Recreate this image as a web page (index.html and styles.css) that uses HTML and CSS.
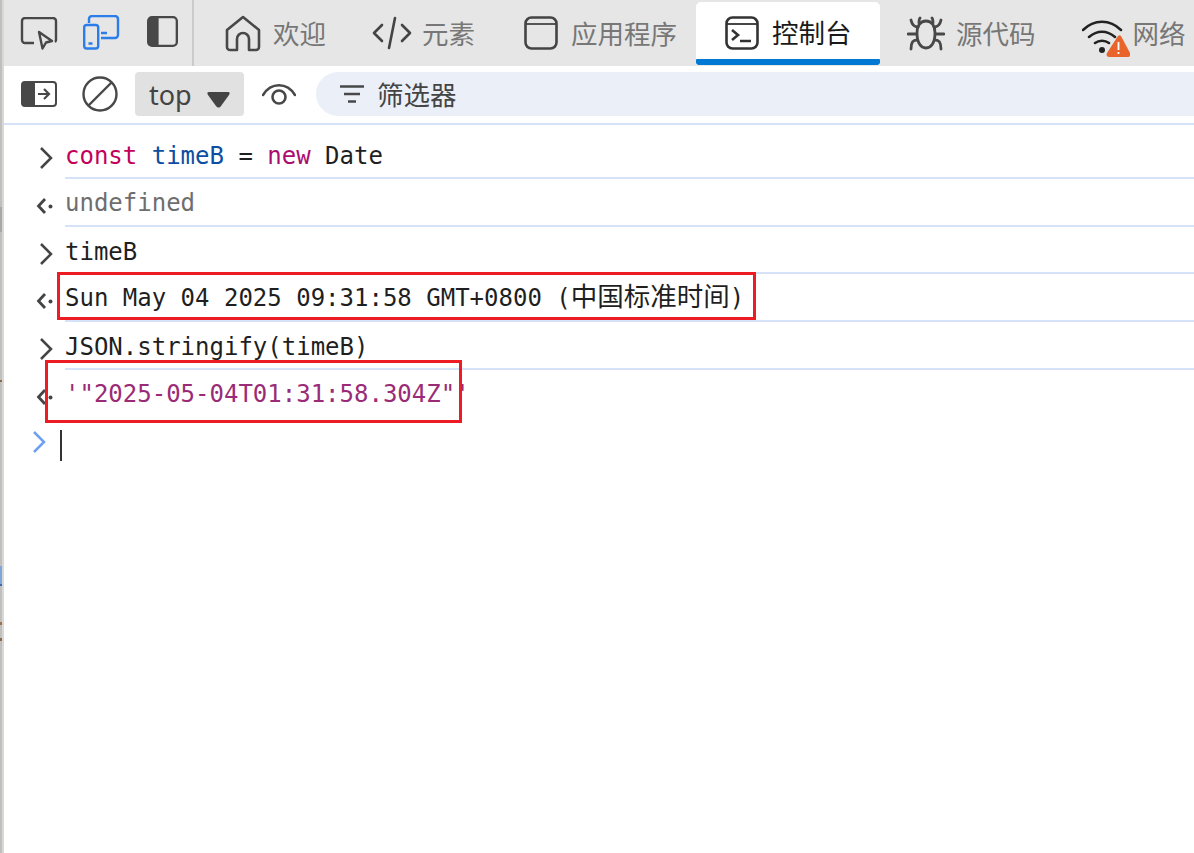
FILE: index.html
```html
<!DOCTYPE html>
<html lang="zh">
<head>
<meta charset="utf-8">
<title>控制台</title>
<link rel="stylesheet" href="styles.css">
</head>
<body>
<div class="edge"></div>
<div class="main">
  <header class="tabbar">
    <div class="tools">
      <svg class="tool t-inspect" width="38" height="34" viewBox="0 0 38 34" fill="none" stroke="#484848" stroke-width="2.400"><path d="M14 26H5a3 3 0 0 1-3-3V4a3 3 0 0 1 3-3h28a3 3 0 0 1 3 3v19a3 3 0 0 1-1 2"/><path d="M19 15l13 9-6 1.500-3.500 6z" stroke-linejoin="round"/></svg>
      <svg class="tool t-device" width="37" height="35" viewBox="0 0 37 35" fill="none" stroke="#2b7de9" stroke-width="2.400"><path d="M6 8V4a3 3 0 0 1 3-3h23a3 3 0 0 1 3 3v16a3 3 0 0 1-3 3H18"/><rect x="1.200" y="10" width="14" height="23.500" rx="2.500"/><path d="M5.500 28.500h4M18 18h6"/></svg>
      <svg class="tool t-dock" width="31" height="31" viewBox="0 0 32 32"><path d="M5 1h7v30H5a4 4 0 0 1-4-4V5a4 4 0 0 1 4-4z" fill="#484848"/><rect x="1.200" y="1.200" width="29.600" height="29.600" rx="4" fill="none" stroke="#484848" stroke-width="2.400"/></svg>
    </div>
    <div class="sep"></div>
    <nav class="tabs">
      <div class="tab">
        <span class="ti"><svg width="36" height="37" viewBox="0 0 36 37" fill="none" stroke="#484848" stroke-width="2.600" stroke-linejoin="round"><path d="M2 15L18 2l16 13v17a3 3 0 0 1-3 3h-7V24a6 6 0 0 0-12 0v11H5a3 3 0 0 1-3-3z"/></svg></span>
        <span class="tl">欢迎</span>
      </div>
      <div class="tab">
        <span class="ti"><svg width="40" height="36" viewBox="0 0 40 36" fill="none" stroke="#444" stroke-width="2.600" stroke-linecap="round" stroke-linejoin="round"><path d="M10 10l-8 8 8 8M30 10l8 8-8 8M23 3l-6 30"/></svg></span>
        <span class="tl">元素</span>
      </div>
      <div class="tab">
        <span class="ti"><svg width="34" height="34" viewBox="0 0 34 34" fill="none" stroke="#444" stroke-width="2.600"><rect x="1.500" y="1.500" width="31" height="31" rx="6"/><path d="M2 8h30" stroke-width="1.800"/></svg></span>
        <span class="tl">应用程序</span>
      </div>
      <div class="tab tab-active">
        <span class="ti"><svg width="34" height="34" viewBox="0 0 34 34" fill="none" stroke="#333" stroke-width="2.600"><rect x="1.500" y="1.500" width="31" height="31" rx="6"/><path d="M2 8h30" stroke-width="1.800"/><path d="M7 14l6 5-6 5M15 25h11"/></svg></span>
        <span class="tl">控制台</span>
      </div>
      <div class="tab tab-src">
        <span class="ti"><svg width="38" height="36" viewBox="0 0 38 36" fill="none" stroke="#484848" stroke-width="2.800" stroke-linecap="round"><path d="M19 6c6 0 9 5 9 12 0 10-4 15-9 15s-9-5-9-15c0-7 3-12 9-12z"/><path d="M12 8c0-2 0-4 1-5M26 8c0-2 0-4-1-5M11 12C7 12 5 10 4 5M27 12c4 0 6-2 7-7M9 19H1M29 19h8M10 25c-4 0-6 2-6 9M28 25c4 0 6 2 6 9"/></svg></span>
        <span class="tl">源代码</span>
      </div>
      <div class="tab tab-net">
        <span class="ti ti-net"><svg width="48" height="44" viewBox="0 0 48 44"><g fill="none" stroke="#222" stroke-width="2.500" stroke-linecap="round"><path d="M1 13C12 2 28 2 39 13M7 20c8-7 18-7 26 0M13 26c4-3 10-3 14 0"/></g><circle cx="20" cy="33" r="3" fill="#222"/><path d="M36 19c1-1 2-1 3 0l9 17c1 2 0 4-2 4H27c-2 0-3-2-2-4z" fill="#e9642a"/><path d="M36.500 25v8M36.500 35v2" stroke="#fff" stroke-width="1.800"/></svg></span>
        <span class="tl">网络</span>
      </div>
    </nav>
  </header>

  <div class="filterbar">
    <svg class="fb-side" width="36" height="26" viewBox="0 0 36 26"><path d="M4 1h10v24H4a3 3 0 0 1-3-3V4a3 3 0 0 1 3-3z" fill="#484848"/><rect x="1" y="1" width="34" height="24" rx="3" fill="none" stroke="#484848" stroke-width="2"/><path d="M17 13h11M23 8l5 5-5 5" fill="none" stroke="#484848" stroke-width="2.200"/></svg>
    <svg class="fb-block" width="36" height="36" viewBox="0 0 36 36" fill="none" stroke="#484848" stroke-width="2.400"><circle cx="18" cy="18" r="16.500"/><path d="M6.500 29.500l23-23"/></svg>
    <div class="context">
      <span class="ctx-label">top</span>
      <svg width="23" height="16" viewBox="0 0 23 16"><path d="M2 0h19c2 0 2 1 1 3l-8 11c-1.500 2-3.500 2-5 0L1 3C0 1 0 0 2 0z" fill="#444"/></svg>
    </div>
    <svg class="fb-eye" width="34" height="22" viewBox="0 0 34 22" fill="none" stroke="#484848" stroke-width="2.600"><path d="M1 12C9 -1 25 -1 33 12" stroke-linecap="round"/><circle cx="17" cy="14" r="6.500"/></svg>
    <div class="filter">
      <svg width="24" height="18" viewBox="0 0 24 18" fill="none" stroke="#484848" stroke-width="2.400"><path d="M0 1.500h24M4 9h16M8 16.500h8"/></svg>
      <span class="filter-label">筛选器</span>
    </div>
  </div>

  <main class="console">
    <div class="row">
      <span class="gut"><svg class="chev" width="14" height="22" viewBox="0 0 14 22" fill="none" stroke="#444" stroke-width="2.500"><path d="M2 1l10 10L2 21"/></svg></span>
      <div class="msg input"><span class="kw">const</span> <span class="var">timeB</span> = <span class="kw2">new</span> Date</div>
    </div>
    <div class="row">
      <span class="gut"><svg class="res" width="18" height="16" viewBox="0 0 18 16"><path d="M9 1L2.500 8 9 15" fill="none" stroke="#444" stroke-width="2.800"/><circle cx="14.500" cy="8.500" r="2" fill="#444"/></svg></span>
      <div class="msg output muted">undefined</div>
    </div>
    <div class="row">
      <span class="gut"><svg class="chev" width="14" height="22" viewBox="0 0 14 22" fill="none" stroke="#444" stroke-width="2.500"><path d="M2 1l10 10L2 21"/></svg></span>
      <div class="msg input">timeB</div>
    </div>
    <div class="row">
      <span class="gut"><svg class="res" width="18" height="16" viewBox="0 0 18 16"><path d="M9 1L2.500 8 9 15" fill="none" stroke="#444" stroke-width="2.800"/><circle cx="14.500" cy="8.500" r="2" fill="#444"/></svg></span>
      <div class="msg output">Sun May 04 2025 09:31:58 GMT+0800 (<span class="cjk">中国标准时间</span>)</div>
    </div>
    <div class="row">
      <span class="gut"><svg class="chev" width="14" height="22" viewBox="0 0 14 22" fill="none" stroke="#444" stroke-width="2.500"><path d="M2 1l10 10L2 21"/></svg></span>
      <div class="msg input">JSON.stringify(timeB)</div>
    </div>
    <div class="row">
      <span class="gut"><svg class="res" width="18" height="16" viewBox="0 0 18 16"><path d="M9 1L2.500 8 9 15" fill="none" stroke="#444" stroke-width="2.800"/><circle cx="14.500" cy="8.500" r="2" fill="#444"/></svg></span>
      <div class="msg output str no-line">'"2025-05-04T01:31:58.304Z"'</div>
    </div>
    <div class="row-prompt">
      <span class="gut"><svg class="chev-in" width="14" height="22" viewBox="0 0 14 22" fill="none" stroke="#6ea0f0" stroke-width="2.500"><path d="M2 1l10 10L2 21"/></svg></span>
      <span class="caret"></span>
    </div>
    <div class="mark mark-a"></div>
    <div class="mark mark-b"></div>
  </main>
</div>
</body>
</html>
```

FILE: styles.css
```css
* { box-sizing: border-box; }
html, body { margin: 0; height: 100%; }
body {
  display: flex;
  background: #fff;
  overflow: hidden;
  font-family: "Noto Sans CJK SC", "Noto Sans", sans-serif;
}
.edge {
  width: 4px;
  flex: none;
  background:
    linear-gradient(#d8d8d6, #d8d8d6) 2px 0 / 2px 100% no-repeat,
    linear-gradient(to bottom, #c0bfbb 0 207px, #a8a8a6 207px 232px, #c0bfbb 232px 380px, #8d6a4c 380px 382px, #c0bfbb 382px 566px, #7ea6d8 566px 584px, #3f68b0 584px 586px, #c0bfbb 586px 622px, #a0704c 622px 625px, #c0bfbb 625px 638px, #8d6a4c 638px 641px, #c0bfbb 641px 100%) 0 0 / 2px 100% no-repeat;
}
.main { flex: 1; min-width: 0; display: flex; flex-direction: column; }

/* top tab bar */
.tabbar { height: 66px; background: #e6e6e6; display: flex; flex: none; }
.tools { width: 188px; display: flex; align-items: flex-start; flex: none; }
.tool { flex: none; display: block; }
.t-inspect { margin: 17px 0 0 16px; }
.t-device { margin: 15px 0 0 25px; }
.t-dock { margin: 16px 0 0 27px; }
.sep { width: 2px; background: #c9cbcd; flex: none; }
.tabs { display: flex; margin-left: 4px; flex: none; }
.tab { display: flex; align-items: center; padding: 0 21px; color: #777; height: 66px; }
.ti { width: 48px; height: 48px; display: flex; align-items: center; justify-content: center; flex: none; }
.tl { font-size: 26.500px; margin-left: 6px; white-space: nowrap; line-height: 1; }
.tab-active {
  position: relative;
  margin: 2px 0 0 -2px;
  height: 63px;
  padding: 4px 28.500px 6px 22px;
  background: #fff;
  color: #1a1a1a;
  border-radius: 5px 5px 0 0;
}
.tab-active::after {
  content: "";
  position: absolute;
  left: 0;
  right: 0;
  bottom: 0;
  height: 6px;
  background: #0078d4;
  border-radius: 1px 1px 3px 3px;
}
.tab-src { padding-left: 22px; }
.tab-net { margin-left: 4px; }
.tab-net .tl { margin-left: 3px; }
.ti-net svg { margin-top: 11px; }

/* console toolbar */
.filterbar {
  height: 59px;
  flex: none;
  display: flex;
  align-items: flex-start;
  border-bottom: 2px solid #d6e2f8;
  background: #fff;
}
.fb-side { margin: 15px 0 0 17px; flex: none; }
.fb-block { margin: 10px 0 0 25px; flex: none; }
.context {
  margin: 6px 0 0 17px;
  width: 109px;
  height: 44px;
  background: #e1e1e1;
  border-radius: 4px;
  display: flex;
  align-items: center;
  padding-left: 14px;
  flex: none;
}
.ctx-label { font-family: "Noto Sans", sans-serif; font-size: 27px; color: #444; line-height: 1; width: 58px; }
.context svg { margin-top: 12px; }
.fb-eye { margin: 17px 0 0 18px; flex: none; }
.filter {
  margin: 6px 0 0 20px;
  flex: 1;
  height: 44px;
  background: #ebeff8;
  border-radius: 22px 0 0 22px;
  display: flex;
  align-items: center;
  padding-left: 24px;
}
.filter-label { font-size: 26.500px; color: #444; margin-left: 13px; line-height: 1; }

/* console output */
.console { position: relative; flex: 1; padding-top: 6px; }
.row { display: flex; height: 47.750px; }
.gut { width: 61px; flex: none; display: flex; }
.chev { margin: 16px 0 0 35px; }
.res { margin: 19px 0 0 32px; }
.msg {
  flex: 1;
  height: 47.750px;
  font-family: "DejaVu Sans Mono", "Noto Sans CJK SC", monospace;
  font-size: 24px;
  color: #1f1f1f;
  white-space: pre;
  border-bottom: 2px solid #d6e2f8;
}
.input { line-height: 51px; }
.output { line-height: 48px; }
.cjk { font-family: "Noto Sans CJK SC", sans-serif; font-size: 26.500px; line-height: 1; }
.no-line { border-bottom: 0; }
.kw { color: #c2005a; }
.kw2 { color: #aa0d6e; }
.var { color: #0b4ea2; }
.muted { color: #6e6e6e; }
.str { color: #9a2b76; }
.row-prompt { display: flex; height: 48px; }
.chev-in { margin: 13px 0 0 28px; }
.caret { width: 2px; height: 31px; background: #333; margin: 12px 0 0 -5px; }
.mark { position: absolute; border: 3px solid #ed1c24; pointer-events: none; }
.mark-a { left: 53px; top: 147px; width: 699px; height: 48px; }
.mark-b { left: 41px; top: 235px; width: 417px; height: 63px; }
```
